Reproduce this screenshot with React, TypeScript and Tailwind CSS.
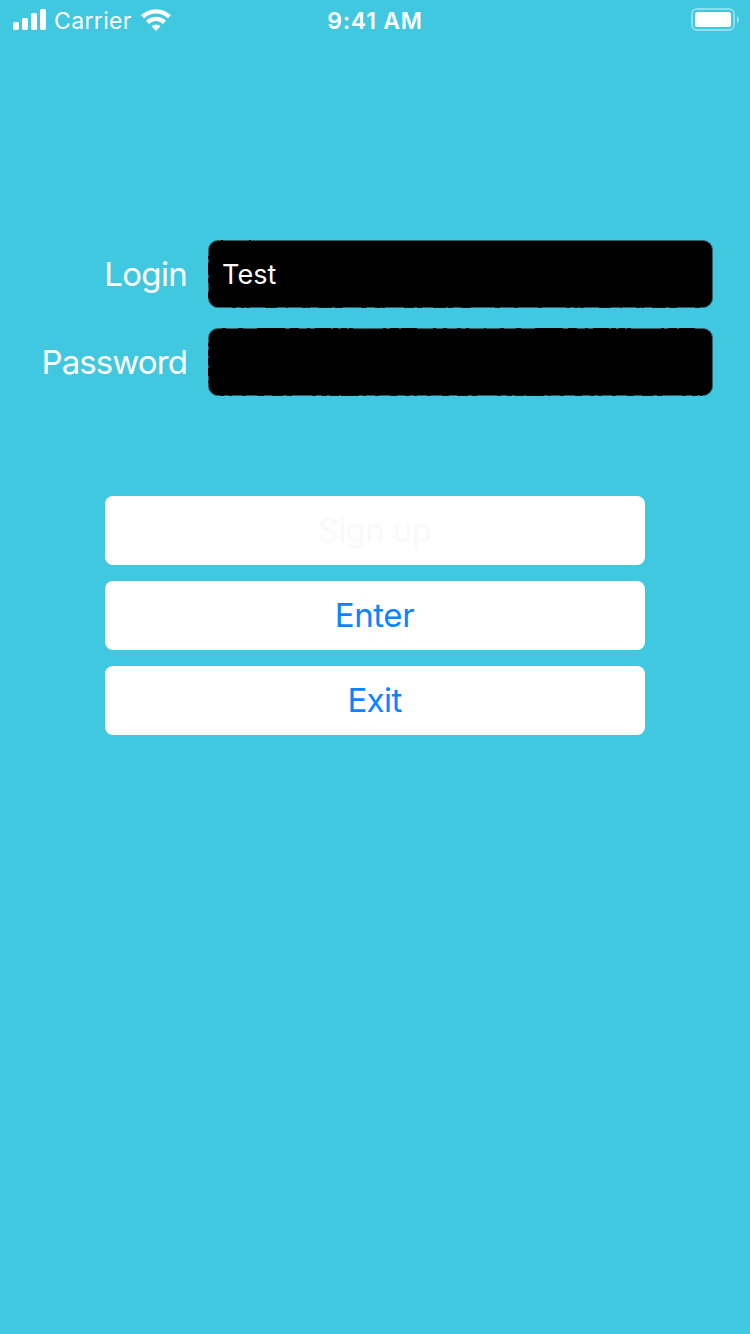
import React, { useState } from "react";

function StatusBar() {
  return (
    <header className="grid h-10 grid-cols-3 text-white">
      <div className="flex items-start pl-[13px]">
        <svg className="mt-[9px]" width="33" height="21" viewBox="0 0 33 21" fill="currentColor" aria-hidden="true">
          <rect x="0" y="13" width="6" height="8" rx="1.7" />
          <rect x="9" y="9" width="6" height="12" rx="1.7" />
          <rect x="18" y="4" width="6" height="17" rx="1.7" />
          <rect x="27" y="0" width="6" height="21" rx="1.7" />
        </svg>
        <span className="ml-2 pt-px text-[23px] leading-10 tracking-[0.35px] whitespace-nowrap">Carrier</span>
        <svg className="mt-[9px] ml-[9px]" width="30" height="22" viewBox="0 0 30 22" aria-hidden="true">
          <g fill="none" stroke="currentColor" strokeWidth="4.4">
            <path d="M1.6 7.8a19.2 19.2 0 0 1 26.8 0" />
            <path d="M6.5 13.3a12.2 12.2 0 0 1 17 0" />
          </g>
          <path d="M15 22l-4.500-4.800a6.700 6.700 0 0 1 9 0z" fill="currentColor" />
        </svg>
      </div>
      <div className="pt-px text-center text-[23px] leading-10 font-semibold tracking-[0.75px] whitespace-nowrap">
        9:41 AM
      </div>
      <div className="flex items-start justify-end pr-[11px]">
        <svg className="mt-2" width="48" height="23" viewBox="0 0 48 23" aria-hidden="true">
          <rect x="1" y="1" width="42" height="21" rx="5" fill="none" stroke="white" strokeOpacity="0.4" strokeWidth="2" />
          <rect x="4" y="4" width="36" height="15" rx="2.6" fill="white" />
          <path d="M46 8v7.4c2.6-1.3 2.6-6.1 0-7.4z" fill="white" fillOpacity="0.5" />
        </svg>
      </div>
    </header>
  );
}

type Edges = { top: string; bottom: string; left: string; right: string };

/* Dash patterns start with zero-length ink: "0 gap ink gap ..." */
const loginEdges: Edges = {
  top: "0 4 2 26 2 600",
  bottom: "0 15 4 5 3 2 4 15 12 9 2 14 4 1 3 8 14 3 8 18 5 9 6 1 3 19 10 3 5 11 13 2 5 8 10 24 5 14 4 20 4 9",
  left: "0 6 3 4 12 3 5 9 10 1",
  right: "0 60",
};

const passwordEdges: Edges = {
  top: "0 5 4 12 5 14 28 5 9 8 3 5 16 2 5 3 6 2 4 30 3 4 9 2 16 16 3 7 4 10 4 5 3 15 2 9",
  bottom: "0 3 4 5 3 10 4 11 7 8 11 4 5 20 4 6 5 3 9 2 18 4 3 9 4 11 7 5",
  left: "0 5 3 4 6 2 7 3 8 5 2 3",
  right: "0 60",
};

function RoughEdges({ edges }: { edges: Edges }) {
  return (
    <svg
      className="pointer-events-none absolute inset-0"
      width="505"
      height="68"
      viewBox="0 0 505 68"
      stroke="black"
      strokeWidth="1"
      aria-hidden="true"
    >
      <path d="M9 0.5H494" strokeDasharray={edges.top} />
      <path d="M9 67.5H494" strokeOpacity="0.8" strokeDasharray={edges.bottom} />
      <path d="M0.5 10V58" strokeDasharray={edges.left} />
      <path d="M504.5 10V58" strokeDasharray={edges.right} />
    </svg>
  );
}

type FieldProps = {
  id: string;
  label: string;
  type: string;
  labelClass: string;
  edges: Edges;
  value: string;
  onChange: (value: string) => void;
};

function Field({ id, label, type, labelClass, edges, value, onChange }: FieldProps) {
  return (
    <div className="flex h-[68px] items-center">
      <label htmlFor={id} className={`w-[187px] text-right text-[33px] leading-[68px] text-white ${labelClass}`}>
        {label}
      </label>
      <div className="relative ml-[21px] h-[68px] w-[505px]">
        <input
          id={id}
          type={type}
          value={value}
          onChange={(e) => onChange(e.target.value)}
          className="h-[68px] w-[505px] rounded-[10px] border border-[#2f626b] bg-black px-[13px] text-[27px] tracking-[0.1px] text-white outline-none"
        />
        <RoughEdges edges={edges} />
      </div>
    </div>
  );
}

function ActionButton({ children, className }: { children: React.ReactNode; className: string }) {
  return (
    <button type="button" className={`h-[69px] w-[540px] rounded-[8px] bg-white pr-px text-[33px] leading-[69px] ${className}`}>
      {children}
    </button>
  );
}

export default function App() {
  const [login, setLogin] = useState("Test");
  const [password, setPassword] = useState("");

  return (
    <main className="h-[1334px] w-[750px] bg-[#40c8e0] font-['Inter',sans-serif]">
      <StatusBar />
      <form className="flex flex-col pt-[200px]">
        <div className="flex flex-col gap-5">
          <Field id="login" label="Login" type="text" labelClass="tracking-[-0.7px]" edges={loginEdges} value={login} onChange={setLogin} />
          <Field id="password" label="Password" type="password" labelClass="tracking-[-0.9px]" edges={passwordEdges} value={password} onChange={setPassword} />
        </div>
        <div className="mt-[100px] flex flex-col items-center gap-4">
          <ActionButton className="text-[#f9f9fb] tracking-[-0.6px]">Sign up</ActionButton>
          <ActionButton className="text-[#0a84ff] tracking-[-0.4px]">Enter</ActionButton>
          <ActionButton className="text-[#0a84ff] tracking-[-0.6px]">Exit</ActionButton>
        </div>
      </form>
    </main>
  );
}
